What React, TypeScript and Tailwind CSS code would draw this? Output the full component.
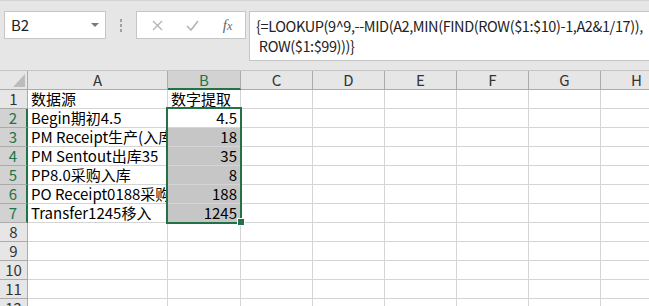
import React from "react";

const cols = [
  { l: "A", w: "w-[140px]" },
  { l: "B", w: "w-[73px]" },
  { l: "C", w: "w-[72px]" },
  { l: "D", w: "w-[72px]" },
  { l: "E", w: "w-[72px]" },
  { l: "F", w: "w-[72px]" },
  { l: "G", w: "w-[72px]" },
  { l: "H", w: "w-[72px]" },
];

// clip: text spills past column A and gets cut by the filled B cell
const rows: { a: string; b: string; num?: boolean; clip?: boolean }[] = [
  { a: "数据源", b: "数字提取" },
  { a: "Begin期初4.5", b: "4.5", num: true },
  { a: "PM Receipt生产(入库", b: "18", num: true, clip: true },
  { a: "PM Sentout出库35", b: "35", num: true },
  { a: "PP8.0采购入库", b: "8", num: true },
  { a: "PO Receipt0188采购入库", b: "188", num: true, clip: true },
  { a: "Transfer1245移入", b: "1245", num: true },
  { a: "", b: "" },
  { a: "", b: "" },
  { a: "", b: "" },
  { a: "", b: "" },
  { a: "", b: "" },
];

function FormulaBar() {
  return (
    <div className="flex h-[70px] items-start border-t border-[#d4d4d4] bg-[#e6e6e6] pl-[4px] pt-[10px]">
      <div className="flex h-[28px] w-[102px] shrink-0 items-center justify-between border border-[#c6c6c6] bg-white pl-[6px] pr-[6px]">
        <span className="text-[15px] text-[#222]">B2</span>
        <svg width="8" height="5" viewBox="0 0 8 5">
          <polygon points="0,0 8,0 4,4" fill="#7a7a7a" />
        </svg>
      </div>
      <div className="flex h-[28px] w-[30px] shrink-0 flex-col items-center justify-center gap-[2px]">
        <span className="h-[3px] w-[2px] bg-[#a0a0a0]" />
        <span className="h-[3px] w-[2px] bg-[#a0a0a0]" />
        <span className="h-[3px] w-[2px] bg-[#a0a0a0]" />
      </div>
      <div className="flex h-[28px] w-[110px] shrink-0 items-center border border-[#c6c6c6] bg-white">
        <div className="flex w-[37px] justify-center pl-[4px]">
          <svg width="11" height="11" viewBox="0 0 11 11">
            <path d="M1 1 L10 10 M10 1 L1 10" stroke="#b4b4b4" strokeWidth="1.4" />
          </svg>
        </div>
        <div className="flex w-[36px] justify-center">
          <svg width="13" height="11" viewBox="0 0 13 11">
            <path d="M1 6 L5 10 L12 1" stroke="#b4b4b4" strokeWidth="1.6" fill="none" />
          </svg>
        </div>
        <div className="flex w-[35px] justify-center font-['Liberation_Serif',serif] text-[15px] italic text-[#666]">
          <span>f</span>
          <span className="mt-[3px] text-[12px]">x</span>
        </div>
      </div>
      <div className="ml-[3px] h-[50px] min-w-0 flex-1 overflow-hidden border border-r-0 border-[#c6c6c6] bg-white pl-[6px] pt-[4px] text-[14.5px] leading-[20px] tracking-[-0.4px] text-[#222] whitespace-pre">
        <div>{"{=LOOKUP(9^9,--MID(A2,MIN(FIND(ROW($1:$10)-1,A2&1/17)),"}</div>
        <div>{" ROW($1:$99)))}"}</div>
      </div>
    </div>
  );
}

function Sheet() {
  return (
    <div className="relative overflow-hidden">
      <div className="flex h-[20px] border-t border-[#c6c6c6]">
        <div className="flex w-[28px] shrink-0 items-end justify-end border-b border-r border-[#ababab] bg-[#e6e6e6] pb-[2px] pr-[2px]">
          <svg width="12" height="13" viewBox="0 0 12 13">
            <polygon points="12,0 12,13 0,13" fill="#bcbcbc" />
          </svg>
        </div>
        {cols.map((c) =>
          c.l === "B" ? (
            <div
              key={c.l}
              className={`${c.w} shrink-0 border-b-2 border-r border-b-[#217346] border-r-[#ababab] bg-[#d2d2d2] text-center text-[15px] leading-[18px] text-[#217346]`}
            >
              {c.l}
            </div>
          ) : (
            <div
              key={c.l}
              className={`${c.w} shrink-0 border-b border-r border-[#ababab] bg-[#e6e6e6] text-center text-[15px] leading-[18px] text-[#333]`}
            >
              {c.l}
            </div>
          )
        )}
      </div>
      {rows.map((r, i) => {
        const n = i + 1;
        const sel = n >= 2 && n <= 7;
        return (
          <div key={n} className="flex h-[19px]">
            {sel ? (
              <div className="w-[28px] shrink-0 border-b border-r-2 border-b-[#ababab] border-r-[#217346] bg-[#d2d2d2] text-center text-[15px] leading-[18px] text-[#217346]">
                {n}
              </div>
            ) : (
              <div className="w-[28px] shrink-0 border-b border-r border-[#ababab] bg-[#e6e6e6] text-center text-[15px] leading-[18px] text-[#333]">
                {n}
              </div>
            )}
            <div
              className={`w-[140px] shrink-0 whitespace-nowrap border-b border-r border-[#d4d4d4] pl-[3px] text-[15px] leading-[18px] text-black ${
                r.clip ? "overflow-x-clip" : ""
              }`}
            >
              {r.a}
            </div>
            <div
              className={`w-[73px] shrink-0 whitespace-nowrap border-b border-r border-[#d4d4d4] px-[3px] text-[15px] leading-[18px] text-black ${
                r.num ? "text-right" : "text-left"
              } ${n >= 3 && n <= 7 ? "bg-[#c6c6c6]" : "bg-white"}`}
            >
              {r.b}
            </div>
            {cols.slice(2).map((c) => (
              <div key={c.l} className={`${c.w} shrink-0 border-b border-r border-[#d4d4d4]`} />
            ))}
          </div>
        );
      })}
      <div className="pointer-events-none absolute left-[166px] top-[37px] h-[117px] w-[76px] border-2 border-[#217346]" />
      <div className="pointer-events-none absolute left-[237px] top-[148px] h-[8px] w-[8px] border border-white bg-[#217346]" />
    </div>
  );
}

export default function App() {
  return (
    <div className="h-[306px] w-[649px] overflow-hidden bg-white font-['Noto_Sans_CJK_SC',sans-serif]">
      <FormulaBar />
      <Sheet />
    </div>
  );
}
